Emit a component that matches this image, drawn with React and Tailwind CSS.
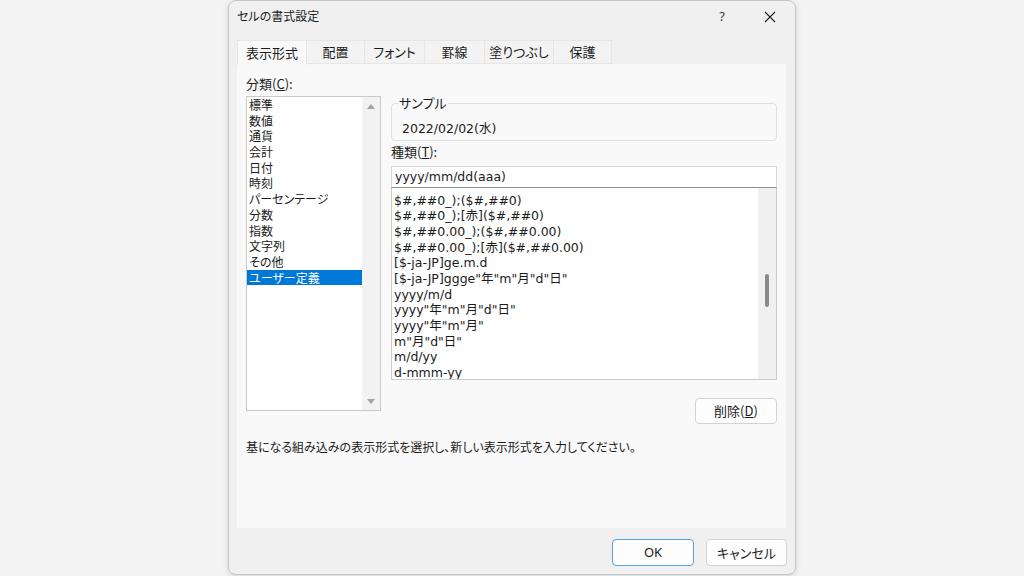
export default function App() {
  const cats = ['標準', '数値', '通貨', '会計', '日付', '時刻', 'パーセンテージ', '分数', '指数', '文字列', 'その他', 'ユーザー定義'];
  const formats = [
    '$#,##0_);($#,##0)',
    '$#,##0_);[赤]($#,##0)',
    '$#,##0.00_);($#,##0.00)',
    '$#,##0.00_);[赤]($#,##0.00)',
    '[$-ja-JP]ge.m.d',
    '[$-ja-JP]ggge"年"m"月"d"日"',
    'yyyy/m/d',
    'yyyy"年"m"月"d"日"',
    'yyyy"年"m"月"',
    'm"月"d"日"',
    'm/d/yy',
    'd-mmm-yy',
  ];
  const tabs = [
    ['表示形式', 'w-[70px]', true],
    ['配置', 'w-[58px]'],
    ['フォント', 'w-[60px]'],
    ['罫線', 'w-[60px]'],
    ['塗りつぶし', 'w-[69px]'],
    ['保護', 'w-[58px]'],
  ];

  return (
    <div className="w-[1024px] h-[576px] bg-[#f3f3f3] flex justify-center font-['Noto_Sans_CJK_JP',sans-serif] [font-feature-settings:'palt'] text-[#1b1b1b]">
      <div className="w-[568px] h-[575px] bg-[#f0f0f0] border border-[#c6c6c6] rounded-[8px] shadow-[0_2px_6px_rgba(0,0,0,0.12)] flex flex-col">
        {/* title bar */}
        <div className="h-[31px] flex items-center">
          <div className="pl-[8px] text-[12px] leading-[16px] flex-1 -mt-[1px]">セルの書式設定</div>
          <div className="flex gap-[2px] pr-[2px] h-full">
            <div className="w-[46px] h-full flex items-center justify-center text-[13px] text-[#404040] font-['Noto_Sans',sans-serif]">?</div>
            <div className="w-[46px] h-full flex items-center justify-center">
              <svg width="12" height="12" viewBox="0 0 12 12">
                <path d="M1 1 L11 11 M11 1 L1 11" stroke="#1f1f1f" strokeWidth="1.1" fill="none" />
              </svg>
            </div>
          </div>
        </div>

        {/* tabs */}
        <div className="mt-[8px] ml-[8px] flex h-[24px]">
          {tabs.map(([label, w, active]) => (
            <div
              key={label}
              className={
                active
                  ? `${w} h-[25px] bg-[#f9f9f9] border-t border-l border-r border-[#e6e6e6] flex items-center justify-center text-[13px] leading-[16px] relative z-10`
                  : `${w} h-[24px] bg-[#f3f3f3] border-t border-r border-b border-[#e6e6e6] flex items-center justify-center text-[13px] leading-[16px]`
              }
            >
              {label}
            </div>
          ))}
        </div>

        {/* panel */}
        <div className="ml-[8px] w-[549px] h-[464px] bg-[#f9f9f9] flex flex-col">
          <div className="flex gap-[10px] px-[9px] pt-[12px]">
            {/* left column */}
            <div className="w-[135px] flex flex-col">
              <div className="text-[13px] leading-[16px] h-[17px]">
                分類(<span className="underline">C</span>):
              </div>
              <div className="mt-[3px] h-[315px] border border-[#c9c9c9] bg-white flex">
                <div className="flex-1 flex flex-col">
                  {cats.map((c) => (
                    <div
                      key={c}
                      className={
                        c === 'ユーザー定義'
                          ? 'h-[15.7px] leading-[15.7px] text-[12px] pl-[2px] bg-[#0078d7] text-white whitespace-nowrap'
                          : 'h-[15.7px] leading-[15.7px] text-[12px] pl-[2px] whitespace-nowrap'
                      }
                    >
                      {c}
                    </div>
                  ))}
                </div>
                <div className="w-[18px] bg-[#f2f2f2] flex flex-col items-center justify-between pt-[7px] pb-[6px]">
                  <svg width="8" height="5" viewBox="0 0 8 5">
                    <path d="M0 5 L4 0 L8 5 Z" fill="#a3a3a3" />
                  </svg>
                  <svg width="8" height="5" viewBox="0 0 8 5">
                    <path d="M0 0 L4 5 L8 0 Z" fill="#a3a3a3" />
                  </svg>
                </div>
              </div>
            </div>

            {/* right column */}
            <div className="w-[386px] flex flex-col">
              <fieldset className="mt-[20px] border border-[#e0e0e0] rounded-[4px]">
                <legend className="ml-[6px] px-[1px] text-[13px] leading-[14px]">サンプル</legend>
                <div className="pl-[10px] pt-[11px] pb-[3px] text-[12.5px] leading-[16px] font-['DejaVu_Sans','Noto_Sans_CJK_JP',sans-serif]">
                  2022/02/02(水)
                </div>
              </fieldset>
              <div className="mt-[3px] text-[13px] leading-[16px]">
                種類(<span className="underline">T</span>):
              </div>
              <div className="mt-[6px] h-[22px] bg-white border border-[#d6d6d6] border-b-[#8f8f8f] pl-[3px] flex items-center text-[12.5px] font-['DejaVu_Sans','Noto_Sans_CJK_JP',sans-serif]">
                yyyy/mm/dd(aaa)
              </div>
              <div className="h-[192px] bg-white border border-t-0 border-[#cdcdcd] flex overflow-hidden">
                <div className="flex-1 pt-[4.5px] pl-[2px] overflow-hidden font-['DejaVu_Sans','Noto_Sans_CJK_JP',sans-serif]">
                  {formats.map((f) => (
                    <div key={f} className="h-[15.7px] leading-[15.7px] text-[12.5px] whitespace-nowrap">
                      {f}
                    </div>
                  ))}
                </div>
                <div className="w-[18px] bg-[#f0f0f0] flex justify-center pt-[86px]">
                  <div className="w-[4px] h-[33px] rounded-full bg-[#8a8a8a]" />
                </div>
              </div>
              <div className="self-end mt-[18px] w-[82px] h-[26px] bg-[#fdfdfd] border border-[#d3d3d3] rounded-[4px] flex items-center justify-center text-[13px]">
                削除(<span className="underline">D</span>)
              </div>
            </div>
          </div>
          <div className="mt-[15px] px-[9px] text-[12px] leading-[16px] whitespace-nowrap">
            基になる組み込みの表示形式を選択し、新しい表示形式を入力してください。
          </div>
        </div>

        {/* bottom buttons */}
        <div className="flex justify-end gap-[12px] pt-[11px] pr-[8px]">
          <div className="w-[82px] h-[27px] bg-[#fdfdfd] border border-[#5aa0e3] rounded-[4px] flex items-center justify-center text-[13px] font-['Noto_Sans','Noto_Sans_CJK_JP',sans-serif]">
            OK
          </div>
          <div className="w-[81px] h-[27px] bg-[#fdfdfd] border border-[#d3d3d3] rounded-[4px] flex items-center justify-center text-[13px]">
            キャンセル
          </div>
        </div>
      </div>
    </div>
  );
}
